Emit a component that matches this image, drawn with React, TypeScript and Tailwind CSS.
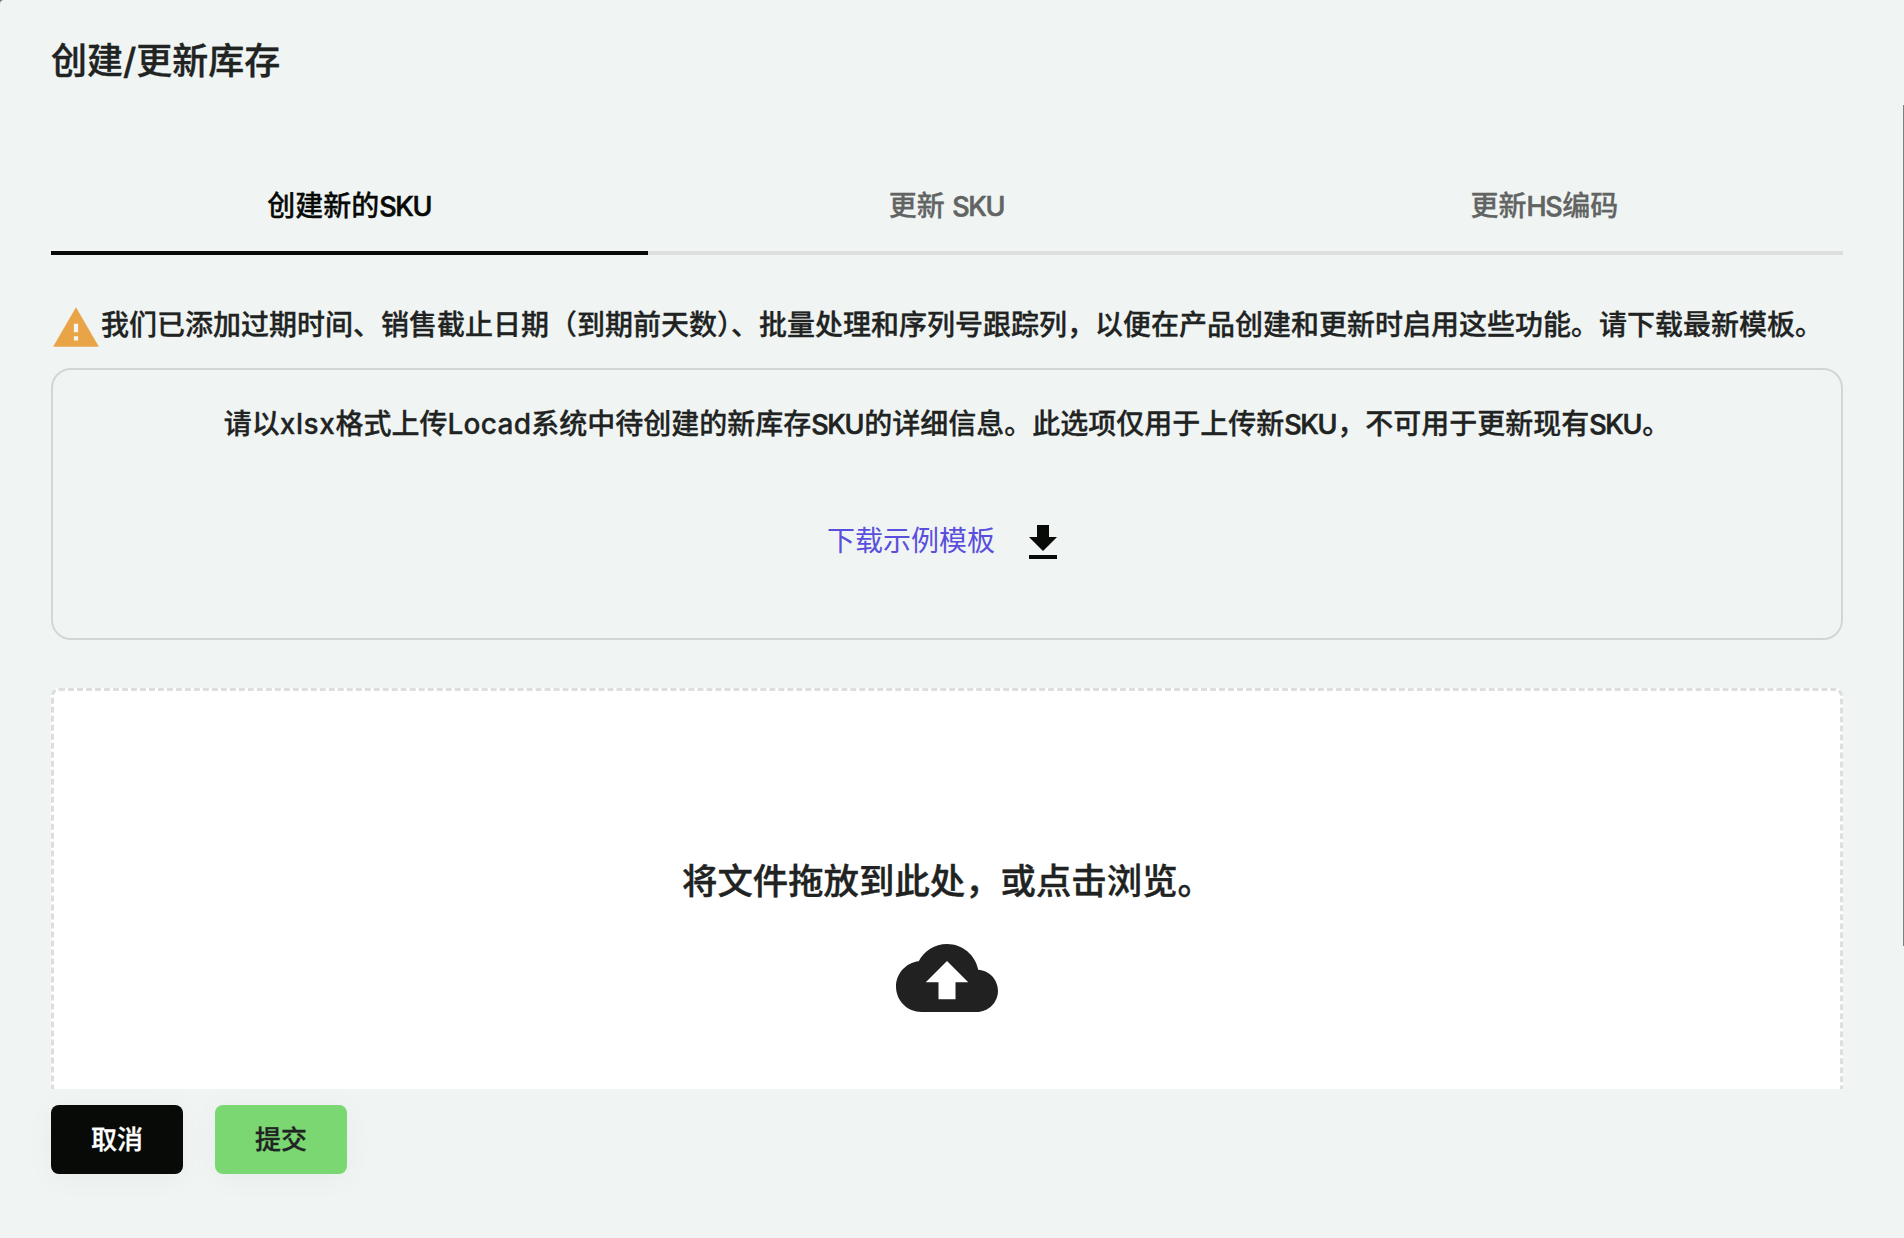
import React, { useState } from 'react';

type TabId = 'create' | 'update' | 'hs';

// Latin abbreviations are set a little tighter than the Chinese around them
const Abbr = ({ children }: { children: React.ReactNode }) => (
  <span className="text-[27px] tracking-[-0.05em] mr-[1px] [-webkit-text-stroke:0.6px]">
    {children}
  </span>
);

const tabs: { id: TabId; label: React.ReactNode }[] = [
  { id: 'create', label: <>创建新的<Abbr>SKU</Abbr></> },
  { id: 'update', label: <>更新 <Abbr>SKU</Abbr></> },
  { id: 'hs', label: <>更新<Abbr>HS</Abbr>编码</> },
];

const WarningIcon = () => (
  <svg viewBox="0 0 24 24" className="w-[50px] h-[50px] shrink-0" fill="#e9a447">
    <path d="M1 21h22L12 2 1 21z" />
    <path d="M11 16h2v2h-2zM11 10h2v4h-2z" fill="#f5f6f2" />
  </svg>
);

const DownloadIcon = () => (
  <svg viewBox="0 0 24 24" className="w-12 h-12 mt-[5px]" fill="#080a07">
    <path d="M19 9h-4V3H9v6H5l7 7 7-7zM5 18v2h14v-2H5z" />
  </svg>
);

const CloudUploadIcon = () => (
  <svg viewBox="0 0 24 24" className="w-[102px] h-[102px] mt-[19px]" fill="#212121">
    <path d="M19.35 10.04C18.67 6.59 15.64 4 12 4 9.11 4 6.6 5.64 5.35 8.04 2.34 8.36 0 10.91 0 14c0 3.31 2.69 6 6 6h13c2.76 0 5-2.24 5-5 0-2.64-2.05-4.78-4.65-4.96zM14 13v4h-4v-4H7l5-5 5 5h-3z" />
  </svg>
);

export default function App() {
  const [activeTab, setActiveTab] = useState<TabId>('create');

  return (
    <div className="h-screen overflow-hidden bg-[#6f7372]">
      <div className="flex flex-col w-full h-full overflow-hidden rounded-tl-[4px] bg-[#f0f5f4] text-[#212322] font-medium font-['Inter','Noto_Sans_CJK_SC',sans-serif] [-webkit-text-stroke:0.3px]">
        {/* Title */}
        <h1 className="h-[105px] shrink-0 pl-[51px] pt-[34px] text-[36px] leading-[54px] [-webkit-text-stroke:0.4px]">
          创建/更新库存
        </h1>

        <div className="flex h-[984px] shrink-0 overflow-hidden">
          <div className="flex-1 min-w-0 pl-[51px] pr-[60px]">
            <div className="grid grid-cols-3 h-[150px] pt-[50px]">
              {tabs.map(tab => (
                <button
                  key={tab.id}
                  onClick={() => setActiveTab(tab.id)}
                  className={`border-b-4 pt-[6px] text-[28px] ${
                    activeTab === tab.id
                      ? 'border-[#080a07] text-[#080a07]'
                      : 'border-[#dedede] text-[#626463]'
                  }`}
                >
                  {tab.label}
                </button>
              ))}
            </div>

            <div className="flex items-start h-[113px] pt-[48px]">
              <WarningIcon />
              <p className="mt-px text-[28px] leading-[42px] whitespace-nowrap">
                我们已添加过期时间、销售截止日期（到期前天数）、批量处理和序列号跟踪列，以便在产品创建和更新时启用这些功能。请下载最新模板。
              </p>
            </div>

            <div className="flex flex-col items-center h-[272px] pt-[33px] border-2 border-[#d2d6d5] rounded-[20px]">
              <p className="text-[28px] leading-[42px] whitespace-nowrap">
                请以<span className="tracking-[0.02em]">xlsx</span>格式上传
                <span className="tracking-[0.01em]">Locad</span>
                系统中待创建的新库存<Abbr>SKU</Abbr>的详细信息。此选项仅用于上传新
                <Abbr>SKU</Abbr>，不可用于更新现有<Abbr>SKU</Abbr>。
              </p>
              <a className="flex items-center mt-[68px] gap-[24px] font-normal text-[28px] leading-[42px] text-[#5a4fdc] [-webkit-text-stroke:0]">
                下载示例模板
                <DownloadIcon />
              </a>
            </div>

            <div className="flex flex-col items-center h-[480px] mt-[48px] pt-[164px] bg-white border-3 border-dashed border-[#dedede] rounded-[8px]">
              <p className="pl-px text-[35.4px] leading-[53px] [-webkit-text-stroke:0.4px]">
                将文件拖放到此处，或点击浏览。
              </p>
              <CloudUploadIcon />
            </div>
          </div>
          <div className="w-px h-[841px] bg-[#808080]" />
        </div>

        {/* Actions */}
        <div className="relative flex gap-8 pl-[51px] pt-4 text-[26px]">
          <button className="w-[132px] h-[69px] rounded-[8px] bg-[#080a07] text-white shadow-[0_4px_30px_rgba(0,0,0,0.04)]">
            取消
          </button>
          <button className="w-[132px] h-[69px] rounded-[8px] bg-[#7ad772] shadow-[0_4px_30px_rgba(0,0,0,0.04)]">
            提交
          </button>
        </div>
      </div>
    </div>
  );
}
